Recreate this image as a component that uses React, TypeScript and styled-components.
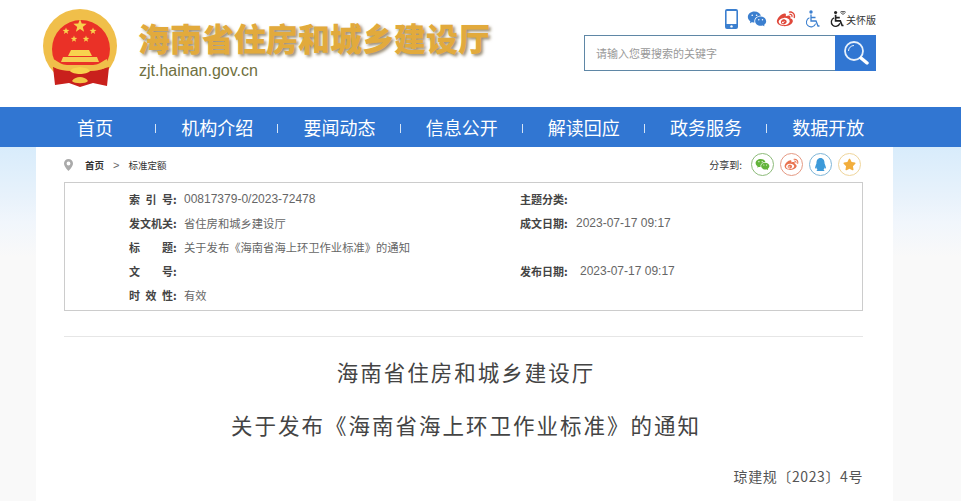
import React from 'react'
import styled, { createGlobalStyle } from 'styled-components'
import { FaQq, FaStar, FaWifi } from 'react-icons/fa'
import { RiWechatFill, RiWeiboFill } from 'react-icons/ri'

const GlobalStyle = createGlobalStyle`
  html, body {
    margin: 0;
    padding: 0;
    height: 100%;
    overflow: hidden;
    background: #fff;
  }
  body {
    font-family: 'Noto Sans CJK SC', 'Liberation Sans', sans-serif;
    color: #555;
  }
`

const Header = styled.header`
  display: flex;
  justify-content: space-between;
  height: 107px;
  padding: 9px 85px 0 43px;
  box-sizing: border-box;
  background: #fff;
`

const Brand = styled.div`
  display: flex;
  align-items: flex-start;
  gap: 20px;
`

const BrandText = styled.div`
  display: flex;
  flex-direction: column;
  padding-top: 5px;
`

const SiteName = styled.div`
  margin-left: -1px;
  font-size: 32px;
  line-height: 46px;
  font-weight: 900;
  color: #e2aa3c;
  text-shadow: 2px 2px 3px rgba(90, 70, 30, 0.6);
  white-space: nowrap;
`

const Domain = styled.div`
  font-family: 'Liberation Sans', sans-serif;
  font-size: 16px;
  line-height: 18px;
  margin-top: 2px;
  color: #6f7040;
`

const Tools = styled.div`
  display: flex;
  flex-direction: column;
  align-items: flex-end;
  gap: 6px;
`

const IconRow = styled.div`
  display: flex;
  align-items: center;
  height: 20px;
  gap: 9px;
`

const ToolIcon = styled.span<{ $color: string }>`
  display: inline-flex;
  align-items: center;
  color: ${(p) => p.$color};
`

const CareLink = styled.span`
  display: inline-flex;
  align-items: center;
  position: relative;
  margin-left: 1px;
  font-size: 10px;
  color: #333;
  gap: 2px;
`

const Wifi = styled(FaWifi)`
  position: absolute;
  left: 10px;
  top: 0;
`

const SearchBox = styled.div`
  display: flex;
  width: 292px;
  height: 36px;
  box-sizing: border-box;
  border: 1px solid #5f87a6;
  background: #fff;
`

const SearchInput = styled.div`
  flex: 1;
  padding-left: 11px;
  font-size: 11px;
  line-height: 34px;
  color: #999;
`

const SearchButton = styled.div`
  display: flex;
  align-items: center;
  justify-content: center;
  width: 41px;
  margin: -1px;
  background: #3176d2;
`

const Nav = styled.nav`
  display: grid;
  grid-template-columns: repeat(7, 122.2px);
  height: 40px;
  padding-left: 34px;
  background: #3176d2;
`

const NavItem = styled.div<{ $first?: boolean }>`
  position: relative;
  text-align: center;
  font-size: 18px;
  line-height: 40px;
  color: #fff;
  &::before {
    content: '';
    display: ${(p) => (p.$first ? 'none' : 'block')};
    position: absolute;
    left: -1px;
    top: 17px;
    width: 1px;
    height: 9px;
    background: #d5e4f6;
  }
`

const Backdrop = styled.div`
  height: 354px;
  padding: 0 68px 0 36px;
  background: linear-gradient(#d8ecfb 0, #e8f2fb 50px, #f1f6fc 75px, #f9f9f9 110px);
`

const Panel = styled.main`
  height: 100%;
  padding: 0 30px 0 28px;
  background: #fff;
`

const TopBar = styled.div`
  display: flex;
  align-items: center;
  justify-content: space-between;
  height: 35px;
`

const Crumbs = styled.div`
  display: flex;
  align-items: center;
  font-size: 9.5px;
  color: #333;
`

const CrumbHome = styled.span`
  margin-left: 12px;
  font-weight: 700;
`

const CrumbArrow = styled.span`
  margin: 0 9px;
  font-family: 'Liberation Sans', sans-serif;
  font-size: 11px;
  color: #666;
`

const Share = styled.div`
  display: flex;
  align-items: center;
  gap: 6px;
  margin-right: 2px;
  font-size: 10px;
  color: #333;
`

const ShareLabel = styled.span`
  margin-right: 3px;
`

const ShareButton = styled.span<{ $color: string; $ring: string }>`
  display: inline-flex;
  align-items: center;
  justify-content: center;
  width: 23px;
  height: 23px;
  box-sizing: border-box;
  border: 1px solid ${(p) => p.$ring};
  border-radius: 50%;
  color: ${(p) => p.$color};
`

const InfoBox = styled.section`
  display: grid;
  grid-template-columns: 391px 1fr;
  grid-auto-rows: 24px;
  height: 129px;
  box-sizing: border-box;
  padding: 4px 0 0 64px;
  border: 1px solid #ccc;
`

const InfoCell = styled.div`
  display: flex;
  align-items: center;
  font-size: 11.3px;
  color: #666;
  white-space: pre;
`

const InfoLabel = styled.span`
  display: inline-block;
  width: 44px;
  font-size: 11px;
  font-weight: 700;
  color: #444;
  text-align-last: justify;
`

const InfoColon = styled.span`
  width: 11px;
  font-weight: 700;
  color: #444;
`

const InfoNumber = styled.span<{ $indent?: number }>`
  padding-left: ${(p) => p.$indent ?? 0}px;
  font-family: 'Liberation Sans', sans-serif;
  font-size: 12px;
`

const Divider = styled.hr`
  height: 1px;
  margin: 25px 0 0;
  border: 0;
  background: #e6e6e6;
`

const DocTitle = styled.h1<{ $top: number }>`
  margin: ${(p) => p.$top}px 0 0;
  padding-left: 5px;
  text-align: center;
  font-size: 21.5px;
  line-height: 32px;
  font-weight: 400;
  letter-spacing: 2px;
  color: #444;
`

const DocNumber = styled.div`
  margin-top: 24px;
  text-align: right;
  font-size: 14px;
  line-height: 22px;
  letter-spacing: 0.6px;
  color: #555;
`

const star = (x: number, y: number, r: number) =>
  [0, 1, 2, 3, 4, 5, 6, 7, 8, 9]
    .map((i) => {
      const a = (Math.PI / 5) * i - Math.PI / 2
      const d = i % 2 === 0 ? r : r * 0.42
      return `${(x + d * Math.cos(a)).toFixed(2)},${(y + d * Math.sin(a)).toFixed(2)}`
    })
    .join(' ')

const Emblem = () => (
  <svg width="76" height="78" viewBox="0 0 76 78" aria-hidden="true">
    <circle cx="37" cy="37" r="37" fill="#f0bf4a" />
    <circle cx="38" cy="40" r="29" fill="#ea3127" />
    <path d="M10 58 L12 76 L26 74 L37 78 L50 74 L64 77 L66 58 L52 62 H24 Z" fill="#c9201c" />
    <polygon points={star(37, 17, 7)} fill="#f8d24e" />
    <polygon points={star(23, 22, 3.6)} fill="#f8d24e" />
    <polygon points={star(50, 22, 3.6)} fill="#f8d24e" />
    <polygon points={star(31, 30, 3.4)} fill="#f8d24e" />
    <polygon points={star(43, 30, 3.4)} fill="#f8d24e" />
    <path d="M28 41h18l3 6H25z" fill="#f8d24e" />
    <path d="M20 48h34l2 5H18z" fill="#f6cb52" />
    <path d="M10 50c6 3 9 6 14 6h26c5 0 8-3 14-6l1 6c-4 6-14 6-27 6S13 62 9 56z" fill="#f0bf4a" />
    <path d="M27 62c3-4 7-3 10-4 3 1 7 0 10 4-3 4-17 4-20 0z" fill="#f8d24e" />
    <path d="M29 72c2-3 5-4 8-4s6 1 8 4c-2 3-14 3-16 0z" fill="#f3c648" />
  </svg>
)

const Phone = () => (
  <svg width="13" height="20" viewBox="0 0 13 20" aria-hidden="true">
    <rect width="13" height="20" rx="2" fill="#3b7fcf" />
    <rect x="1.6" y="2" width="9.8" height="13" fill="#fff" />
    <circle cx="6.5" cy="17.4" r="1.2" fill="#fff" />
  </svg>
)

const Chair = ({ color, width, stroke }: { color: string; width: number; stroke: number }) => (
  <svg width={width} height="18" viewBox="0 0 15 18" fill="none" aria-hidden="true">
    <circle cx="6" cy="2" r="1.7" fill={color} />
    <path d="M6 4.5V11H11L13 16H14.5M6 7.5H10.5" stroke={color} strokeWidth={stroke} />
    <path d="M4.4 7.8A4.7 4.7 0 1 0 10.6 13.6" stroke={color} strokeWidth={stroke * 0.8} />
  </svg>
)

const Magnifier = () => (
  <svg width="26" height="26" viewBox="0 0 26 26" fill="none" aria-hidden="true">
    <circle cx="11" cy="11" r="9" stroke="#e8f1fb" strokeWidth="1.8" />
    <path d="M5.5 11a5.5 5.5 0 0 1 5.5-5.5" stroke="#e8f1fb" strokeWidth="1" />
    <path d="M18 18l6 5" stroke="#fff" strokeWidth="3.4" strokeLinecap="round" />
  </svg>
)

const Pin = () => (
  <svg width="9" height="12" viewBox="0 0 9 12" aria-hidden="true">
    <path d="M4.5 0A4.5 4.5 0 0 0 0 4.5C0 7.6 4.5 12 4.5 12S9 7.6 9 4.5A4.5 4.5 0 0 0 4.5 0zm0 6.4a1.9 1.9 0 1 1 0-3.8 1.9 1.9 0 0 1 0 3.8z" fill="#aaa" />
  </svg>
)

const navItems = ['首页', '机构介绍', '要闻动态', '信息公开', '解读回应', '政务服务', '数据开放']

const infoRows = [
  { label: '索 引 号', value: '00817379-0/2023-72478', numeric: true, rightLabel: '主题分类', rightValue: '', indent: 0 },
  { label: '发文机关', value: '省住房和城乡建设厅', rightLabel: '成文日期', rightValue: '2023-07-17 09:17', indent: 1 },
  { label: '标 题', value: '关于发布《海南省海上环卫作业标准》的通知', rightLabel: '', rightValue: '', indent: 0 },
  { label: '文 号', value: '', rightLabel: '发布日期', rightValue: '2023-07-17 09:17', indent: 5 },
  { label: '时 效 性', value: '有效', rightLabel: '', rightValue: '', indent: 0 },
]

export default function App() {
  return (
    <>
      <GlobalStyle />
      <Header>
        <Brand>
          <Emblem />
          <BrandText>
            <SiteName>海南省住房和城乡建设厅</SiteName>
            <Domain>zjt.hainan.gov.cn</Domain>
          </BrandText>
        </Brand>
        <Tools>
          <IconRow>
            <ToolIcon $color="#3b7fcf">
              <Phone />
            </ToolIcon>
            <ToolIcon $color="#3b7fcf">
              <RiWechatFill size={20} />
            </ToolIcon>
            <ToolIcon $color="#e0483a">
              <RiWeiboFill size={20} />
            </ToolIcon>
            <ToolIcon $color="#3b7fcf">
              <Chair color="#3b7fcf" width={15} stroke={1.3} />
            </ToolIcon>
            <CareLink>
              <Chair color="#222" width={14} stroke={1.8} />
              <Wifi size={6} />
              <span>关怀版</span>
            </CareLink>
          </IconRow>
          <SearchBox>
            <SearchInput>请输入您要搜索的关键字</SearchInput>
            <SearchButton>
              <Magnifier />
            </SearchButton>
          </SearchBox>
        </Tools>
      </Header>
      <Nav>
        {navItems.map((item, i) => (
          <NavItem key={item} $first={i === 0}>
            {item}
          </NavItem>
        ))}
      </Nav>
      <Backdrop>
        <Panel>
          <TopBar>
            <Crumbs>
              <Pin />
              <CrumbHome>首页</CrumbHome>
              <CrumbArrow>&gt;</CrumbArrow>
              <span>标准定额</span>
            </Crumbs>
            <Share>
              <ShareLabel>分享到:</ShareLabel>
              <ShareButton $color="#62b33a" $ring="#8dbb7a">
                <RiWechatFill size={15} />
              </ShareButton>
              <ShareButton $color="#e8734f" $ring="#e59a84">
                <RiWeiboFill size={15} />
              </ShareButton>
              <ShareButton $color="#3d9ad9" $ring="#7fb6d8">
                <FaQq size={13} />
              </ShareButton>
              <ShareButton $color="#f2ae3d" $ring="#efd59b">
                <FaStar size={13} />
              </ShareButton>
            </Share>
          </TopBar>
          <InfoBox>
            {infoRows.map((row) => (
              <React.Fragment key={row.label}>
                <InfoCell>
                  <InfoLabel>{row.label}</InfoLabel>
                  <InfoColon>:</InfoColon>
                  {row.numeric ? <InfoNumber>{row.value}</InfoNumber> : row.value}
                </InfoCell>
                <InfoCell>
                  {row.rightLabel && (
                    <>
                      <InfoLabel>{row.rightLabel}</InfoLabel>
                      <InfoColon>:</InfoColon>
                      <InfoNumber $indent={row.indent}>{row.rightValue}</InfoNumber>
                    </>
                  )}
                </InfoCell>
              </React.Fragment>
            ))}
          </InfoBox>
          <Divider />
          <DocTitle $top={19}>海南省住房和城乡建设厅</DocTitle>
          <DocTitle $top={21}>关于发布《海南省海上环卫作业标准》的通知</DocTitle>
          <DocNumber>琼建规〔2023〕4号</DocNumber>
        </Panel>
      </Backdrop>
    </>
  )
}
